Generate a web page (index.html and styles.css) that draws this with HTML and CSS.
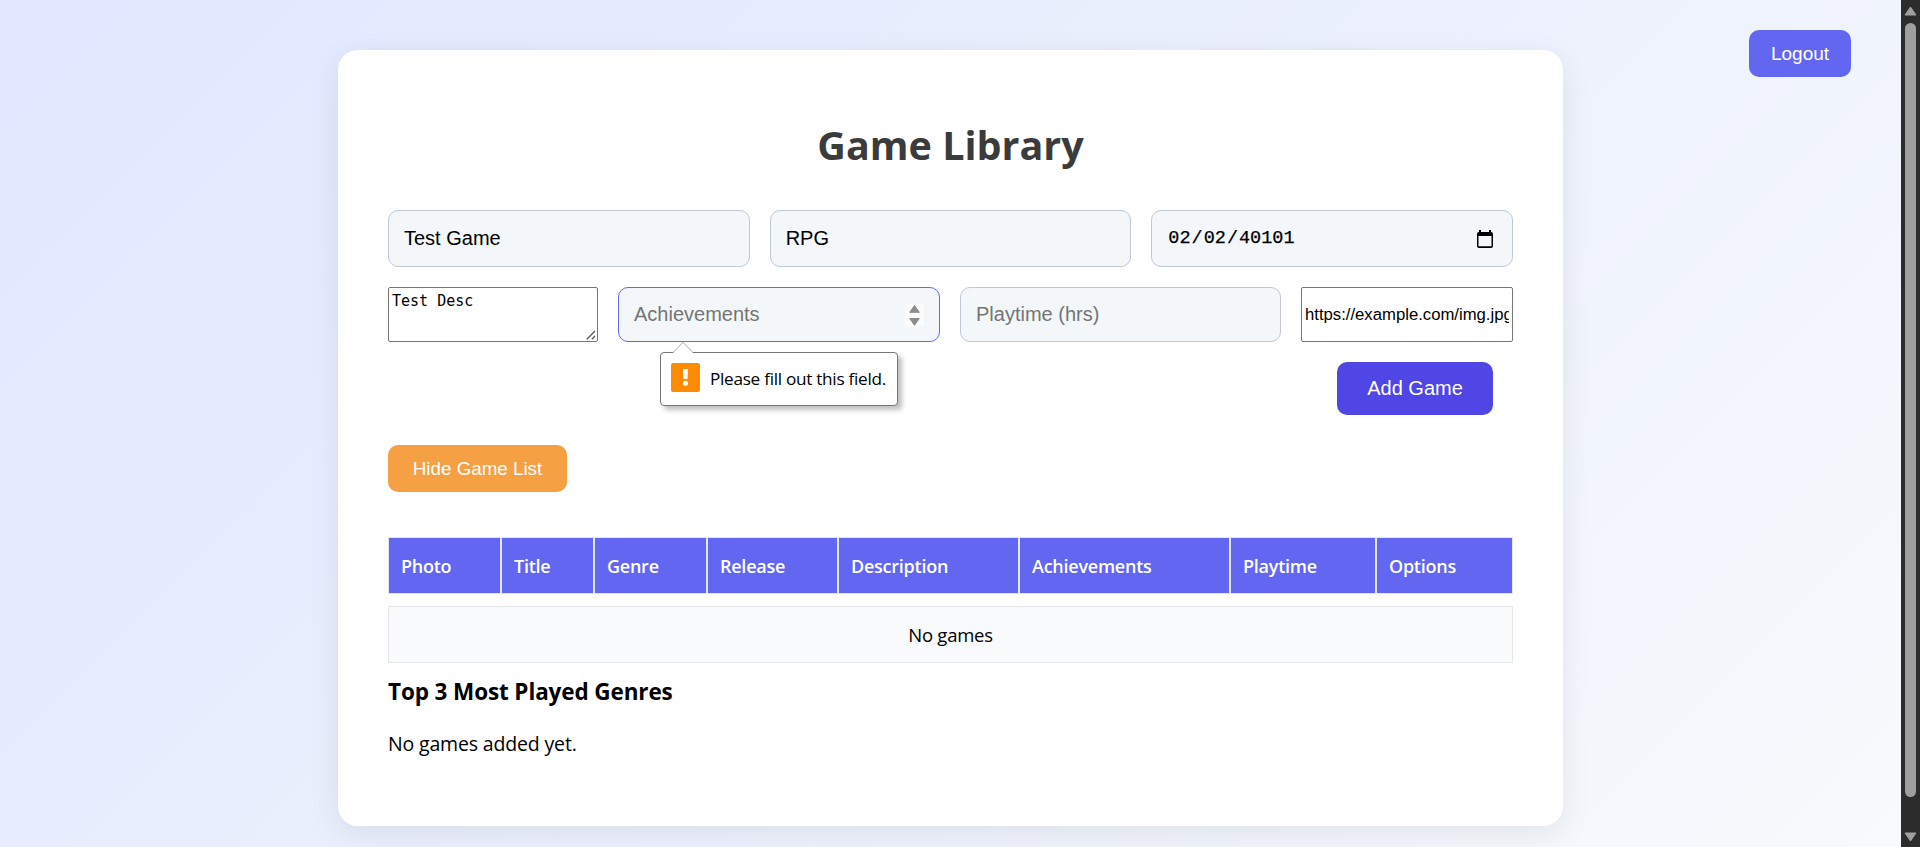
FILE: index.html
```html
<!DOCTYPE html>
<html lang="en">
<head>
<meta charset="utf-8">
<title>Game Library</title>
<link rel="stylesheet" href="styles.css">
</head>
<body>
<div class="viewport">
  <div class="page">
    <button class="btn logout" type="button">Logout</button>
    <main class="card">
      <h1 class="title"><span>Game Library</span></h1>
      <form class="form" novalidate>
        <div class="row row-main">
          <input class="field" type="text" value="Test Game">
          <input class="field" type="text" value="RPG">
          <div class="field date">
            <span class="date-text">02<i>/</i>02<i>/</i>40101</span>
            <svg class="calendar" viewBox="0 0 16 18" width="16" height="18"><path fill="#000" fill-rule="evenodd" d="M2 0h2v2h8V0h2v2a2 2 0 0 1 2 2v12a2 2 0 0 1-2 2H2a2 2 0 0 1-2-2V4a2 2 0 0 1 2-2zM1.5 6v10.2h13V6z"/></svg>
          </div>
        </div>
        <div class="row row-details">
          <div class="desc-box">
            <textarea class="plain desc">Test Desc</textarea>
            <svg class="grip" viewBox="0 0 10 10" width="10" height="10"><path fill="none" stroke="#555" stroke-width="1.3" d="M.8 9.2 9 1M5.8 9.2 9 6"/></svg>
          </div>
          <div class="achievements">
            <div class="field number">
              <span>Achievements</span>
              <svg class="spinner" viewBox="0 0 19 22" width="19" height="22"><path fill="#fbfbfb" d="M0 0h19v22H0z"/><path fill="#8b8b8b" stroke="#8b8b8b" stroke-linejoin="round" d="M9.5 1.5 14.3 8.3H4.7zM9.5 21.3 14.3 14.5H4.7z"/></svg>
            </div>
            <div class="bubble">
              <svg class="bubble-tip" viewBox="0 0 22 12" width="22" height="12"><path fill="#fff" d="M1 12 11 1l10 11z"/><path fill="none" stroke="#aaa" d="M1 11.5 11 1.2l10 10.3"/></svg>
              <svg class="warning" viewBox="0 0 29 29" width="29" height="29"><rect width="29" height="29" rx="2" fill="#ff8c00"/><path fill="#fff" d="M12 6h5l-.5 10h-4z"/><circle cx="14.5" cy="20.3" r="2.5" fill="#fff"/></svg>
              <span class="bubble-text">Please fill out this field.</span>
            </div>
          </div>
          <input class="field" type="text" placeholder="Playtime (hrs)">
          <input class="plain url" type="text" value="https://example.com/img.jpg">
        </div>
        <div class="actions"><button class="btn add" type="button">Add Game</button></div>
      </form>
      <button class="btn hide" type="button">Hide Game List</button>
      <div class="table">
        <div class="head">
          <div class="cell">Photo</div><div class="cell">Title</div><div class="cell">Genre</div><div class="cell">Release</div><div class="cell">Description</div><div class="cell">Achievements</div><div class="cell">Playtime</div><div class="cell">Options</div>
        </div>
        <div class="empty"><span>No games</span></div>
      </div>
      <h3 class="subtitle"><span>Top 3 Most Played Genres</span></h3>
      <p class="note"><span>No games added yet.</span></p>
    </main>
  </div>
  <div class="scrollbar">
    <svg viewBox="0 0 13 10" width="13" height="10"><path fill="#9f9f9f" stroke="#9f9f9f" stroke-linejoin="round" d="M6.5 1 12 9H1z"/></svg>
    <div class="thumb"></div>
    <svg viewBox="0 0 13 10" width="13" height="10"><path fill="#9f9f9f" stroke="#9f9f9f" stroke-linejoin="round" d="M6.5 9 12 1H1z"/></svg>
  </div>
</div>
</body>
</html>
```
FILE: styles.css
```css
* { box-sizing: border-box; }
body { margin: 0; font-family: "Open Sans", "Noto Sans", sans-serif; color: #000; }
.viewport { display: flex; height: 847px; overflow: hidden; }
.page {
  position: relative;
  width: 1901px;
  height: 876px;
  padding-top: 50px;
  background: linear-gradient(135deg, #e0e7ff, #f8fafc);
}
.card {
  width: 1225px;
  height: 776px;
  margin: 0 auto;
  padding: 71px 50px 0;
  background: #fff;
  border-radius: 20px;
  box-shadow: 0 8px 32px rgba(0, 0, 0, 0.08);
}
.title { margin: 0 0 41px; height: 48px; line-height: 48px; text-align: center; font-size: 39.5px; color: #3b3b3b; letter-spacing: 0; }
.btn { display: block; border: 0; border-radius: 10px; padding: 0; color: #fff; font-family: "Liberation Sans", Arial, sans-serif; }
.logout { position: absolute; top: 30px; right: 50px; width: 102px; height: 47px; background: #6366f1; font-size: 19px; }
.form { display: grid; gap: 20px; }
.row { display: grid; column-gap: 20px; }
.row-main { grid-template-columns: repeat(3, 1fr); height: 57px; }
.row-details { grid-template-columns: 210px 322px 321px 212px; height: 55px; }
.field {
  width: 100%;
  height: 100%;
  min-width: 0;
  padding: 0 15px;
  border: 1px solid #bfc9d4;
  border-radius: 10px;
  background: #f3f7fa;
  font-family: "Liberation Sans", Arial, sans-serif;
  font-size: 20px;
}
.field::placeholder { color: #757575; }
.date { display: flex; align-items: center; justify-content: space-between; padding: 0 19px 0 16px; font-family: "Liberation Mono", monospace; }
.date-text { font-size: 18.5px; -webkit-text-stroke: 0.25px #000; }
.date-text i { font-style: normal; margin: 0 1px; }
.desc-box { position: relative; }
.grip { position: absolute; right: 2px; bottom: 2px; }
.achievements { position: relative; }
.number { display: flex; align-items: center; justify-content: space-between; border-color: #6366f1; color: #757575; }
.plain { width: 100%; height: 100%; border: 1px solid #767676; border-radius: 2px; background: #fff; }
.desc { display: block; resize: none; padding: 3px; font: 15px/20px "DejaVu Sans Mono", monospace; letter-spacing: 0; }
.url { padding: 0 3px; font: 16.7px "Liberation Sans", Arial, sans-serif; }
.bubble {
  position: absolute;
  left: 42px;
  top: 65px;
  z-index: 2;
  display: flex;
  gap: 10px;
  width: 238px;
  height: 54px;
  padding: 10px;
  border: 1px solid #767676;
  border-radius: 4px;
  background: #fff;
  box-shadow: 4px 4px 5px rgba(0, 0, 0, 0.25);
}
.bubble-tip { position: absolute; left: 11px; top: -12px; }
.warning { flex: none; }
.bubble-text { font-size: 17.2px; line-height: 32px; letter-spacing: -0.29px; white-space: nowrap; }
.actions { display: flex; justify-content: flex-end; padding-right: 20px; }
.add { width: 156px; height: 53px; background: #4f46e5; font-size: 20px; }
.hide { margin-top: 30px; width: 179px; height: 47px; background: #f6a044; font-size: 18.8px; }
.table { display: grid; gap: 12px; margin-top: 45px; }
.head { display: grid; grid-template-columns: 113px 93px 113px 131px 181px 211px 146px 137px; height: 57px; }
.cell { display: flex; align-items: center; padding: 0 12px; border: 1px solid #e5e7eb; background: #6366f1; color: #fff; font-size: 18px; font-weight: 600; letter-spacing: -0.25px; }
.empty { display: flex; align-items: center; justify-content: center; height: 57px; border: 1px solid #e5e7eb; background: #f8fafc; font-size: 18.5px; letter-spacing: -0.25px; }
.subtitle { margin: 14px 0 0; font-size: 22.5px; line-height: 30px; letter-spacing: -0.12px; }
.note { margin: 22px 0 0; font-size: 19.5px; line-height: 30px; letter-spacing: -0.16px; }
.scrollbar { flex: none; display: flex; flex-direction: column; align-items: center; justify-content: space-between; width: 19px; height: 847px; padding: 6px 0 5px; background: #2c2c2c; }
.thumb { width: 11px; height: 774px; margin-bottom: 29px; border-radius: 6px; background: #9f9f9f; }
```
